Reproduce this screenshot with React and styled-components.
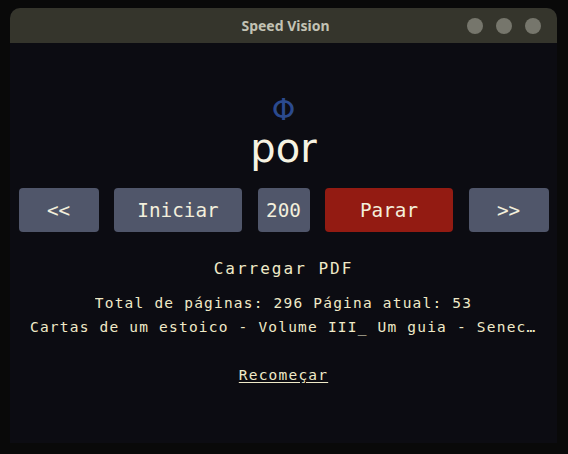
import React from "react";
import styled, { createGlobalStyle } from "styled-components";

const Global = createGlobalStyle`
  html, body { margin: 0; padding: 0; background: #090909; }
  body { width: 568px; height: 454px; overflow: hidden; }
`;

const Screen = styled.div`
  width: 568px;
  height: 454px;
  padding: 8px 11px 11px 10px;
  box-sizing: border-box;
  background: #090909;
`;

const Window = styled.div`
  width: 547px;
  height: 435px;
  display: flex;
  flex-direction: column;
  border-radius: 10px 10px 0 0;
  overflow: hidden;
  background: #0c0c12;
`;

const TitleBar = styled.div`
  height: 35px;
  flex: none;
  background: #35352c;
  display: grid;
  grid-template-columns: 1fr auto 1fr;
  align-items: center;
  padding: 0 16px 0 16px;
`;

const Title = styled.div`
  grid-column: 2;
  font-family: "Noto Sans", sans-serif;
  font-weight: 700;
  font-size: 14px;
  color: #c2c2b4;
  transform: translateX(2px);
`;

const Dots = styled.div`
  grid-column: 3;
  justify-self: end;
  display: flex;
  gap: 13px;
`;

const Dot = styled.span`
  width: 16px;
  height: 16px;
  border-radius: 50%;
  background: #76766c;
`;

const Body = styled.div`
  flex: 1;
  display: flex;
  flex-direction: column;
  align-items: center;
  padding: 52px 20px 0;
  font-family: "DejaVu Sans Mono", monospace;
  color: #f0eac8;
`;

const Focus = styled.div`
  height: 30px;
  line-height: 30px;
  font-family: "DejaVu Sans", sans-serif;
  font-size: 30px;
  color: #2b4a8e;
`;

const Word = styled.div`
  height: 46px;
  line-height: 46px;
  font-family: "DejaVu Sans", sans-serif;
  font-size: 40px;
  color: #f6f3e2;
`;

const Controls = styled.div`
  margin-top: 17px;
  display: flex;
  gap: 15.5px;
`;

const Button = styled.button`
  width: ${(p) => p.$w}px;
  height: 44px;
  border: none;
  border-radius: 4px;
  padding: 0;
  background: ${(p) => (p.$danger ? "#931b12" : "#50566a")};
  color: #f3efdc;
  font-family: "DejaVu Sans Mono", monospace;
  font-size: 19.3px;
  display: flex;
  align-items: center;
  justify-content: center;
`;

const Load = styled.div`
  margin-top: 27px;
  height: 20px;
  line-height: 20px;
  font-size: 16px;
  letter-spacing: 2px;
`;

const Info = styled.div`
  max-width: 100%;
  height: 24px;
  line-height: 24px;
  font-size: 14.5px;
  letter-spacing: 1.2px;
  white-space: nowrap;
  overflow: hidden;
  text-overflow: ellipsis;
  margin-top: ${(p) => p.$mt || 0}px;
`;

const Restart = styled.a`
  margin-top: 24px;
  height: 24px;
  line-height: 24px;
  font-size: 14.5px;
  letter-spacing: 1.2px;
  color: #f0eac8;
  text-decoration: underline;
  text-underline-offset: 2px;
`;

export default function App() {
  return (
    <Screen>
      <Global />
      <Window>
        <TitleBar>
          <Title>Speed Vision</Title>
          <Dots>
            <Dot />
            <Dot />
            <Dot />
          </Dots>
        </TitleBar>
        <Body>
          <Focus>Φ</Focus>
          <Word>por</Word>
          <Controls>
            <Button $w={80}>&lt;&lt;</Button>
            <Button $w={128}>Iniciar</Button>
            <Button $w={52}>200</Button>
            <Button $w={128} $danger>Parar</Button>
            <Button $w={80}>&gt;&gt;</Button>
          </Controls>
          <Load>Carregar PDF</Load>
          <Info $mt={12}>Total de páginas: 296 Página atual: 53</Info>
          <Info>Cartas de um estoico - Volume III_ Um guia - Seneca.pdf</Info>
          <Restart>Recomeçar</Restart>
        </Body>
      </Window>
    </Screen>
  );
}
